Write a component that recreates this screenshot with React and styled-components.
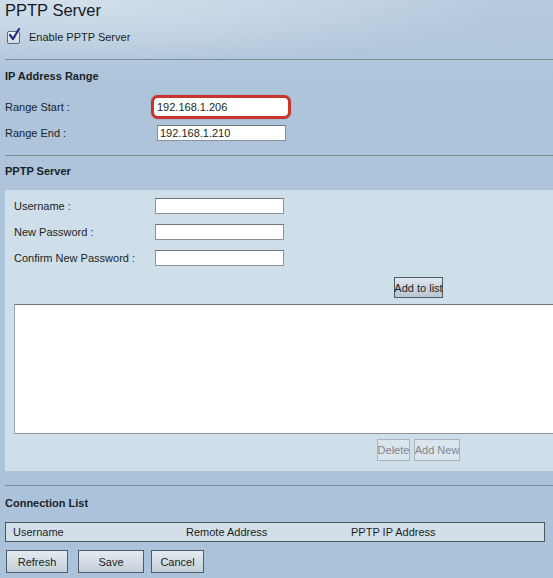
import React from "react";
import styled, { createGlobalStyle } from "styled-components";

const Global = createGlobalStyle`
  html, body { margin: 0; padding: 0; overflow: hidden; }
  body {
    width: 553px; height: 578px;
    background:
      radial-gradient(ellipse 420px 70px at 80px 0px, rgba(214,226,237,0.9), rgba(214,226,237,0) 100%),
      linear-gradient(180deg, #b7cbdf 0px, #adc4da 80px, #abc3da 578px);
    font-family: "Liberation Sans", Arial, Helvetica, sans-serif;
    color: #1b1f24;
  }
`;

const Page = styled.div`
  width: 620px;
  padding-left: 5px;
  display: flex;
  flex-direction: column;
`;

const Title = styled.div`
  font-size: 16.5px;
  line-height: 20px;
  color: #14181d;
`;

const CheckRow = styled.label`
  display: flex;
  align-items: center;
  gap: 9px;
  height: 22px;
  margin-top: 6px;
  padding-left: 2px;
  font-size: 11px;
`;

const CheckBox = styled.span`
  position: relative;
  width: 11px;
  height: 11px;
  border: 1px solid #5c6873;
  background: linear-gradient(#f4f6f8, #d4dbe1);
  border-radius: 2px;
`;

const Divider = styled.div`
  height: 1px;
  background: #7c8a97;
  margin-top: ${(p) => p.$top}px;
`;

const SectionTitle = styled.div`
  font-size: 11px;
  font-weight: bold;
  line-height: 14px;
  margin-top: ${(p) => p.$top}px;
`;

const FormGrid = styled.div`
  display: grid;
  grid-template-columns: ${(p) => p.$label}px auto;
  row-gap: ${(p) => p.$gap}px;
  align-items: center;
  margin-top: ${(p) => p.$top}px;
  font-size: 11px;
`;

const Label = styled.span`
  line-height: 16px;
`;

const Input = styled.div`
  width: 125px;
  height: 14px;
  margin-left: ${(p) => p.$shift || 0}px;
  border: 1px solid #8a939b;
  border-top-color: #6f777f;
  background: #fff;
  font-size: 11px;
  line-height: 14px;
  padding-left: 2px;
  box-sizing: content-box;
`;

const Highlight = styled.div`
  width: 131px;
  height: 18px;
  margin-left: -4px;
  border: 3px solid #c9352d;
  border-radius: 7px;
  background: #fff;
  font-size: 11px;
  line-height: 18px;
  padding-left: 3px;
  box-shadow: 0 0 1px rgba(120, 20, 20, 0.5);
`;

const Panel = styled.div`
  margin-top: 12px;
  background: #cfdfea;
  padding: 7px 0 10px 9px;
  display: flex;
  flex-direction: column;
`;

const ButtonRow = styled.div`
  display: flex;
  gap: ${(p) => p.$gap}px;
  margin-top: ${(p) => p.$top}px;
  padding-left: ${(p) => p.$left}px;
`;

const Button = styled.div`
  display: flex;
  align-items: center;
  justify-content: center;
  flex-shrink: 0;
  white-space: nowrap;
  box-sizing: border-box;
  width: ${(p) => p.$w}px;
  height: ${(p) => p.$h}px;
  margin-left: ${(p) => p.$ml || 0}px;
  font-size: 11px;
  border: 1px solid ${(p) => (p.$disabled ? "#a9b4bd" : "#4f5a64")};
  color: ${(p) => (p.$disabled ? "#7d868e" : "#1b1f24")};
  background: ${(p) =>
    p.$disabled
      ? "#dbe5ed"
      : p.$dark
      ? "linear-gradient(#dfe7ee, #b9c6d0)"
      : "linear-gradient(#e4ebf1, #c3cfd9)"};
`;

const ListBox = styled.div`
  margin-top: 6px;
  height: 128px;
  background: #fff;
  border-top: 1px solid #6d757c;
  border-left: 1px solid #9aa3ab;
  border-bottom: 1px solid #8d969e;
`;

const Table = styled.div`
  margin-top: 12px;
  width: 540px;
  height: 20px;
  box-sizing: border-box;
  border: 1px solid #4b5661;
  background: #d2dfe9;
  display: grid;
  grid-template-columns: 173px 165px auto;
  align-items: center;
  padding-left: 7px;
  font-size: 11px;
`;

export default function App() {
  return (
    <>
      <Global />
      <Page>
        <Title>PPTP Server</Title>
        <CheckRow>
          <CheckBox>
            <svg
              width="14"
              height="14"
              viewBox="0 0 14 14"
              style={{ position: "absolute", left: 0, top: -4 }}
            >
              <path d="M2 7 L5 11 L11 1" fill="none" stroke="#1f2c8a" strokeWidth="2.2" strokeLinecap="round" strokeLinejoin="round" />
            </svg>
          </CheckBox>
          Enable PPTP Server
        </CheckRow>
        <Divider $top={11} />
        <SectionTitle $top={9}>IP Address Range</SectionTitle>
        <FormGrid $label={150} $gap={6} $top={12}>
          <Label>Range Start :</Label>
          <Highlight>192.168.1.206</Highlight>
          <Label>Range End :</Label>
          <Input $shift={2}>192.168.1.210</Input>
        </FormGrid>
        <Divider $top={14} />
        <SectionTitle $top={8}>PPTP Server</SectionTitle>
        <Panel>
          <FormGrid $label={141} $gap={10} $top={1}>
            <Label>Username :</Label>
            <Input />
            <Label>New Password :</Label>
            <Input />
            <Label>Confirm New Password :</Label>
            <Input />
          </FormGrid>
          <ButtonRow $gap={0} $top={11} $left={380}>
            <Button $w={49} $h={21} $dark>Add to list</Button>
          </ButtonRow>
          <ListBox />
          <ButtonRow $gap={4} $top={5} $left={363}>
            <Button $w={33} $h={22} $disabled>Delete</Button>
            <Button $w={46} $h={22} $disabled>Add New</Button>
          </ButtonRow>
        </Panel>
        <Divider $top={14} />
        <SectionTitle $top={10}>Connection List</SectionTitle>
        <Table>
          <span>Username</span>
          <span>Remote Address</span>
          <span>PPTP IP Address</span>
        </Table>
        <ButtonRow $gap={7} $top={8} $left={1}>
          <Button $w={62} $h={23}>Refresh</Button>
          <Button $w={66} $h={23} $ml={3}>Save</Button>
          <Button $w={53} $h={23}>Cancel</Button>
        </ButtonRow>
      </Page>
    </>
  );
}
